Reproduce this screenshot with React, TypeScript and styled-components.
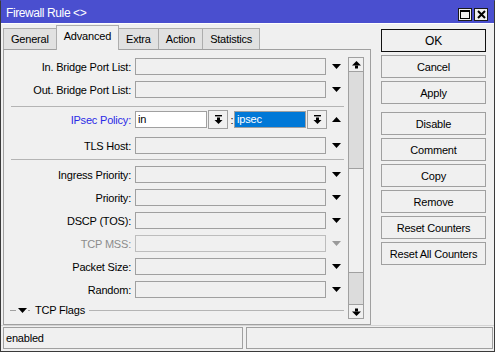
import styled, { createGlobalStyle } from 'styled-components';

const GlobalStyle = createGlobalStyle`
  html, body {
    margin: 0;
    padding: 0;
    background: #f0f0f0;
  }
  body {
    font-family: "Liberation Sans", Arial, sans-serif;
    font-size: 11px;
    letter-spacing: -0.2px;
    color: #000;
  }
`;

const tabs = ['General', 'Advanced', 'Extra', 'Action', 'Statistics'];

const buttons = [
  { label: 'OK', primary: true },
  { label: 'Cancel' },
  { label: 'Apply' },
  { label: 'Disable', spaced: true },
  { label: 'Comment' },
  { label: 'Copy' },
  { label: 'Remove' },
  { label: 'Reset Counters' },
  { label: 'Reset All Counters' },
];

const DownArrow = ({ color = '#000' }: { color?: string }) => (
  <ArrowIcon width="9" height="5" viewBox="0 0 9 5">
    <polygon points="0,0 9,0 4.5,5" fill={color} />
  </ArrowIcon>
);

const UpArrow = () => (
  <ArrowIcon width="9" height="5" viewBox="0 0 9 5">
    <polygon points="0,5 9,5 4.5,0" fill="#000" />
  </ArrowIcon>
);

const PickIcon = () => (
  <svg width="9" height="9" viewBox="0 0 9 9">
    <rect x="1" y="0" width="7" height="1.4" fill="#000" />
    <rect x="3" y="2.5" width="3" height="2.5" fill="#000" />
    <polygon points="0.5,5 8.5,5 4.5,9" fill="#000" />
  </svg>
);

const ScrollArrow = ({ up }: { up?: boolean }) => (
  <svg width="9" height="8" viewBox="0 0 9 8">
    {up ? (
      <>
        <polygon points="4.5,0 9,4.5 0,4.5" fill="#000" />
        <rect x="3" y="4.5" width="3" height="3" fill="#000" />
      </>
    ) : (
      <>
        <rect x="3" y="0.5" width="3" height="3" fill="#000" />
        <polygon points="0,3.5 9,3.5 4.5,8" fill="#000" />
      </>
    )}
  </svg>
);

type RowSpec = { label: string; tone?: 'normal' | 'muted'; gap?: number };

const FieldRow = ({ label, tone = 'normal', gap = 6 }: RowSpec) => (
  <Row $mt={gap}>
    <Label $tone={tone}>{label}:</Label>
    <Field $disabled={tone === 'muted'} />
    <DownArrow color={tone === 'muted' ? '#9a9a9a' : '#000'} />
  </Row>
);

export default function App() {
  return (
    <>
      <GlobalStyle />
      <Window>
        <TitleBar>
          <Title>Firewall Rule &lt;&gt;</Title>
          <TitleButtons>
            <TitleButton>
              <svg width="10" height="9" viewBox="0 0 10 9">
                <rect x="0.5" y="0.5" width="9" height="8" fill="none" stroke="#000" />
                <rect x="0" y="0" width="10" height="2" fill="#000" />
              </svg>
            </TitleButton>
            <TitleButton>
              <svg width="9" height="9" viewBox="0 0 9 9">
                <path d="M1 1 L8 8 M8 1 L1 8" stroke="#000" strokeWidth="2" />
              </svg>
            </TitleButton>
          </TitleButtons>
        </TitleBar>

        <Body>
          <Main>
            <TabStrip>
              {tabs.map((t) => (
                <Tab key={t} $active={t === 'Advanced'}>
                  {t}
                </Tab>
              ))}
            </TabStrip>
            <Panel>
              <Form>
                <FieldRow label="In. Bridge Port List" gap={0} />
                <FieldRow label="Out. Bridge Port List" />
                <Separator $mt={8} $mb={3} />
                <Row $h={19}>
                  <Label $tone="link">IPsec Policy:</Label>
                  <SmallField $white $lead>in</SmallField>
                  <PickButton>
                    <PickIcon />
                  </PickButton>
                  <Colon>:</Colon>
                  <SmallField $selected>ipsec</SmallField>
                  <PickButton>
                    <PickIcon />
                  </PickButton>
                  <UpArrow />
                </Row>
                <FieldRow label="TLS Host" gap={8} />
                <Separator $mt={5} $mb={6} />
                <FieldRow label="Ingress Priority" gap={0} />
                <FieldRow label="Priority" />
                <FieldRow label="DSCP (TOS)" />
                <FieldRow label="TCP MSS" tone="muted" />
                <FieldRow label="Packet Size" />
                <FieldRow label="Random" />
                <GroupHeader>
                  <GroupDash />
                  <DownArrow />
                  <GroupDot />
                  <GroupTitle>TCP Flags</GroupTitle>
                  <GroupLine />
                </GroupHeader>
              </Form>
              <ScrollBar>
                <ScrollButton $top>
                  <ScrollArrow up />
                </ScrollButton>
                <ScrollTrack>
                  <ScrollThumb style={{ marginTop: 96 }} />
                </ScrollTrack>
                <ScrollButton>
                  <ScrollArrow />
                </ScrollButton>
              </ScrollBar>
            </Panel>
          </Main>

          <Side>
            {buttons.map((b) => (
              <ActionButton key={b.label} $primary={b.primary} $spaced={b.spaced}>
                {b.label}
              </ActionButton>
            ))}
          </Side>
        </Body>

        <StatusBar>
          <StatusField $width={240}>enabled</StatusField>
          <StatusField />
        </StatusBar>
      </Window>
    </>
  );
}

const Window = styled.div`
  width: 495px;
  height: 352px;
  box-sizing: border-box;
  border: 1px solid #3a3a3a;
  border-top-color: #4a4fcf;
  background: #f0f0f0;
  display: flex;
  flex-direction: column;
  overflow: hidden;
`;

const TitleBar = styled.div`
  flex: none;
  height: 22px;
  background: #4a4fcf;
  border-bottom: 1px solid #ffffff;
  display: flex;
  align-items: center;
  padding: 0 6px 0 5px;
`;

const Title = styled.div`
  flex: 1;
  color: #ffffff;
  font-size: 12px;
  letter-spacing: -0.4px;
  margin-top: 1px;
`;

const TitleButtons = styled.div`
  display: flex;
  gap: 2px;
  align-self: flex-end;
  margin-bottom: 2px;
`;

const TitleButton = styled.div`
  width: 14px;
  height: 13px;
  box-sizing: border-box;
  border: 1px solid #1a1a1a;
  background: #f0f0f0;
  display: flex;
  align-items: center;
  justify-content: center;
`;

const Body = styled.div`
  flex: 1;
  display: flex;
  gap: 10px;
  padding: 1px 8px 0 2px;
  min-height: 0;
`;

const Main = styled.div`
  width: 368px;
  display: flex;
  flex-direction: column;
`;

const TabStrip = styled.div`
  height: 24px;
  display: flex;
  align-items: flex-end;
`;

const Tab = styled.div<{ $active?: boolean }>`
  position: relative;
  box-sizing: border-box;
  height: ${({ $active }) => ($active ? '25px' : '21px')};
  margin-bottom: ${({ $active }) => ($active ? '-1px' : '0')};
  z-index: ${({ $active }) => ($active ? 1 : 0)};
  padding: 4px 7px 0;
  border: 1px solid #adadad;
  border-bottom: none;
  background: ${({ $active }) => ($active ? '#f0f0f0' : '#e1e1e1')};
  & + & {
    margin-left: -1px;
  }
`;

const Panel = styled.div`
  flex: 1;
  display: flex;
  border: 1px solid #a0a0a0;
  background: #f0f0f0;
  min-height: 0;
`;

const Form = styled.div`
  flex: 1;
  display: flex;
  flex-direction: column;
  padding-top: 8px;
`;

const Row = styled.div<{ $mt?: number; $h?: number }>`
  display: flex;
  align-items: center;
  height: ${({ $h }) => $h ?? 17}px;
  margin-top: ${({ $mt }) => $mt ?? 0}px;
  flex: none;
`;

const Label = styled.div<{ $tone: 'normal' | 'muted' | 'link' }>`
  width: 127px;
  flex: none;
  text-align: right;
  white-space: nowrap;
  color: ${({ $tone }) =>
    $tone === 'muted' ? '#8c8c8c' : $tone === 'link' ? '#2a2ae6' : '#000'};
`;

const Field = styled.div<{ $disabled?: boolean }>`
  width: 191px;
  height: 17px;
  box-sizing: border-box;
  margin-left: 4px;
  margin-right: 6px;
  border: 1px solid ${({ $disabled }) => ($disabled ? '#bdbdbd' : '#a0a0a0')};
  background: #f0f0f0;
`;

const ArrowIcon = styled.svg`
  flex: none;
  display: block;
`;

const SmallField = styled.div<{ $white?: boolean; $selected?: boolean; $lead?: boolean }>`
  width: 72px;
  height: 17px;
  box-sizing: border-box;
  margin-left: ${({ $lead }) => ($lead ? '4px' : '0')};
  border: 1px solid #a0a0a0;
  padding: 0 2px;
  line-height: 15px;
  background: ${({ $white, $selected }) =>
    $selected ? '#0078d7' : $white ? '#ffffff' : '#f0f0f0'};
  color: ${({ $selected }) => ($selected ? '#ffffff' : '#000')};
`;

const PickButton = styled.div`
  width: 20px;
  height: 19px;
  box-sizing: border-box;
  margin: 0 5px 0 1px;
  border: 1px solid #a0a0a0;
  display: flex;
  align-items: center;
  justify-content: center;
`;

const Colon = styled.div`
  width: 4px;
  margin-left: -3px;
  text-align: center;
  color: #000;
`;

const Separator = styled.div<{ $mt: number; $mb: number }>`
  flex: none;
  height: 1px;
  background: #b4b4b4;
  margin: ${({ $mt, $mb }) => `${$mt}px 4px ${$mb}px 7px`};
`;

const GroupHeader = styled.div`
  display: flex;
  align-items: center;
  height: 14px;
  margin-top: 5px;
  padding-left: 6px;
  padding-right: 4px;
`;

const GroupDash = styled.div`
  width: 6px;
  height: 1px;
  background: #a0a0a0;
  margin-right: 2px;
`;

const GroupDot = styled.div`
  width: 2px;
  height: 1px;
  background: #a0a0a0;
  margin-left: 1px;
`;

const GroupTitle = styled.div`
  margin-left: 5px;
  white-space: nowrap;
`;

const GroupLine = styled.div`
  flex: 1;
  height: 1px;
  background: #b4b4b4;
  margin-left: 4px;
`;

const ScrollBar = styled.div`
  width: 16px;
  flex: none;
  box-sizing: border-box;
  margin: 7px 6px 5px 0;
  border: 1px solid #a0a0a0;
  background: #dcdcdc;
  display: flex;
  flex-direction: column;
`;

const ScrollButton = styled.div<{ $top?: boolean }>`
  flex: none;
  height: 14px;
  box-sizing: border-box;
  background: #f0f0f0;
  border-bottom: ${({ $top }) => ($top ? '1px solid #a0a0a0' : 'none')};
  border-top: ${({ $top }) => ($top ? 'none' : '1px solid #a0a0a0')};
  display: flex;
  align-items: center;
  justify-content: center;
`;

const ScrollTrack = styled.div`
  flex: 1;
  display: flex;
  flex-direction: column;
`;

const ScrollThumb = styled.div`
  height: 105px;
  box-sizing: border-box;
  background: #f0f0f0;
  border-top: 1px solid #a0a0a0;
  border-bottom: 1px solid #a0a0a0;
`;

const Side = styled.div`
  width: 105px;
  display: flex;
  flex-direction: column;
  gap: 3px;
  padding-top: 4px;
`;

const ActionButton = styled.div<{ $primary?: boolean; $spaced?: boolean }>`
  height: 23px;
  box-sizing: border-box;
  border: 1px solid ${({ $primary }) => ($primary ? '#111' : '#a0a0a0')};
  background: #f0f0f0;
  display: flex;
  align-items: center;
  justify-content: center;
  white-space: nowrap;
  font-size: ${({ $primary }) => ($primary ? '12px' : '11px')};
  margin-top: ${({ $spaced }) => ($spaced ? '5px' : '0')};
`;

const StatusBar = styled.div`
  flex: none;
  height: 26px;
  box-sizing: border-box;
  border-top: 1px solid #d4d4d4;
  padding: 1px 1px 2px 2px;
  display: flex;
  gap: 3px;
`;

const StatusField = styled.div<{ $width?: number }>`
  ${({ $width }) => ($width ? `width: ${$width}px;` : 'flex: 1;')}
  box-sizing: border-box;
  border: 1px solid #a0a0a0;
  padding-left: 2px;
  display: flex;
  align-items: center;
`;
